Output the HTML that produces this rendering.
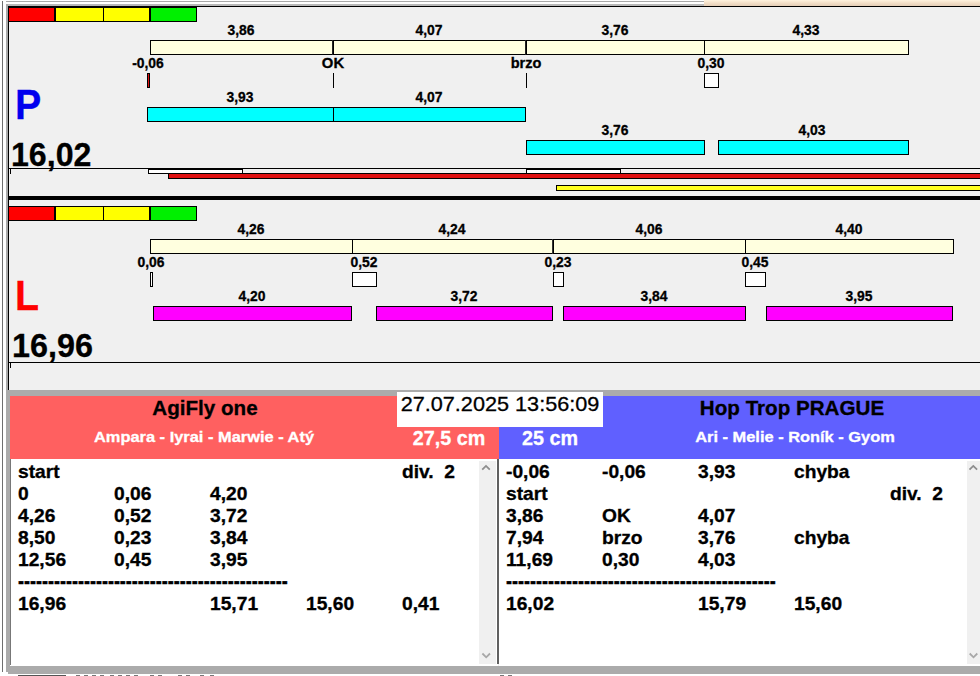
<!DOCTYPE html>
<html><head><meta charset="utf-8"><title>Flyball timing</title>
<style>
html,body{margin:0;padding:0}
body{width:980px;height:676px;position:relative;overflow:hidden;background:#f0f0f0;font-family:"Liberation Sans",sans-serif;font-weight:700}
.a{position:absolute;display:block}
.t{position:absolute;white-space:pre;line-height:1;display:block;-webkit-text-stroke:0.3px currentColor}
</style></head><body>
<div class="a" style="left:0px;top:0px;width:980px;height:6px;background:#ffffff"></div>
<div class="a" style="left:2px;top:1px;width:702px;height:1px;background:#a8a8a8"></div>
<div class="a" style="left:6px;top:4px;width:698px;height:2px;background:#b8b8b8"></div>
<div class="a" style="left:704px;top:0;width:276px;height:6px;background:linear-gradient(#fff3df,#f3dfc8 50%,#e4cdb6)"></div>
<div class="a" style="left:0px;top:0px;width:6px;height:676px;background:#ffffff"></div>
<div class="a" style="left:2px;top:1px;width:1px;height:671px;background:#6e6e6e"></div>
<div class="a" style="left:6px;top:4px;width:2px;height:668px;background:#a9a9a9"></div>
<div class="a" style="left:8px;top:6px;width:972px;height:384px;background:#f0f0f0"></div>
<div class="a" style="left:8px;top:6px;width:972px;height:1px;background:#000"></div>
<div class="a" style="left:8px;top:6px;width:1px;height:384px;background:#000"></div>
<div class="a" style="left:8px;top:7px;width:47px;height:15px;background:#ff0000;border:1px solid #000;box-sizing:border-box;"></div>
<div class="a" style="left:55px;top:7px;width:49px;height:15px;background:#ffff00;border:1px solid #000;box-sizing:border-box;"></div>
<div class="a" style="left:103px;top:7px;width:47px;height:15px;background:#ffff00;border:1px solid #000;box-sizing:border-box;"></div>
<div class="a" style="left:150px;top:7px;width:47px;height:15px;background:#00e800;border:1px solid #000;box-sizing:border-box;"></div>
<div class="a" style="left:150px;top:7px;width:47px;height:15px;background:#00f000;border:1px solid #000;box-sizing:border-box;"></div>
<span class="t " style="top:22.65px;font-size:14px;color:#000;left:241px;transform:translateX(-50%) scaleX(0.99);">3,86</span>
<span class="t " style="top:22.65px;font-size:14px;color:#000;left:429px;transform:translateX(-50%) scaleX(0.99);">4,07</span>
<span class="t " style="top:22.65px;font-size:14px;color:#000;left:615px;transform:translateX(-50%) scaleX(0.99);">3,76</span>
<span class="t " style="top:22.65px;font-size:14px;color:#000;left:806px;transform:translateX(-50%) scaleX(0.99);">4,33</span>
<div class="a" style="left:150px;top:40px;width:759px;height:15px;background:#ffffdf;border:1px solid #000;box-sizing:border-box;"></div>
<div class="a" style="left:333px;top:40px;width:1px;height:15px;background:#000"></div>
<div class="a" style="left:526px;top:40px;width:1px;height:15px;background:#000"></div>
<div class="a" style="left:704px;top:40px;width:1px;height:15px;background:#000"></div>
<div class="a" style="left:332px;top:40px;width:1px;height:15px;background:#222"></div>
<div class="a" style="left:525px;top:40px;width:1px;height:15px;background:#222"></div>
<span class="t " style="top:55.65px;font-size:14px;color:#000;left:147.5px;transform:translateX(-50%) scaleX(0.99);">-0,06</span>
<span class="t " style="top:55.65px;font-size:14px;color:#000;left:332.8px;transform:translateX(-50%) scaleX(1.06);">OK</span>
<span class="t " style="top:55.65px;font-size:14px;color:#000;left:525.9px;transform:translateX(-50%) scaleX(1.04);">brzo</span>
<span class="t " style="top:55.65px;font-size:14px;color:#000;left:711px;transform:translateX(-50%) scaleX(0.99);">0,30</span>
<div class="a" style="left:147px;top:73px;width:3px;height:15px;background:#e01010;border:1px solid #000;box-sizing:border-box;"></div>
<div class="a" style="left:333px;top:73px;width:1px;height:15px;background:#000"></div>
<div class="a" style="left:526px;top:73px;width:1px;height:15px;background:#000"></div>
<div class="a" style="left:704px;top:73px;width:15px;height:15px;background:#fff;border:1px solid #000;box-sizing:border-box;"></div>
<span class="t " style="top:89.65px;font-size:14px;color:#000;left:240px;transform:translateX(-50%) scaleX(0.99);">3,93</span>
<span class="t " style="top:89.65px;font-size:14px;color:#000;left:429px;transform:translateX(-50%) scaleX(0.99);">4,07</span>
<div class="a" style="left:147px;top:107px;width:379px;height:15px;background:#00ffff;border:1px solid #000;box-sizing:border-box;"></div>
<div class="a" style="left:333px;top:107px;width:1px;height:15px;background:#000"></div>
<span class="t " style="top:122.65px;font-size:14px;color:#000;left:615px;transform:translateX(-50%) scaleX(0.99);">3,76</span>
<span class="t " style="top:122.65px;font-size:14px;color:#000;left:812px;transform:translateX(-50%) scaleX(0.99);">4,03</span>
<div class="a" style="left:526px;top:140px;width:179px;height:15px;background:#00ffff;border:1px solid #000;box-sizing:border-box;"></div>
<div class="a" style="left:718px;top:140px;width:191px;height:15px;background:#00ffff;border:1px solid #000;box-sizing:border-box;"></div>
<span class="t " style="top:83.00px;font-size:43px;color:#0000ee;left:14.6px;transform-origin:0 0;transform:scaleX(0.915);">P</span>
<span class="t " style="top:137.90px;font-size:33.2px;color:#000;left:11.4px;transform-origin:0 0;transform:scaleX(0.968);">16,02</span>
<div class="a" style="left:9px;top:168px;width:971px;height:1px;background:#000"></div>
<div class="a" style="left:10px;top:169px;width:1px;height:5px;background:#000"></div>
<div class="a" style="left:148px;top:169px;width:95px;height:5px;background:#fff;border:1px solid #000;box-sizing:border-box;"></div>
<div class="a" style="left:526px;top:169px;width:95px;height:5px;background:#fff;border:1px solid #000;box-sizing:border-box;"></div>
<div class="a" style="left:168px;top:173px;width:820px;height:6px;background:#e01010;border:1px solid #000;box-sizing:border-box;"></div>
<div class="a" style="left:556px;top:185px;width:430px;height:6px;background:#ffff20;border:1px solid #000;box-sizing:border-box;"></div>
<div class="a" style="left:9px;top:196px;width:971px;height:4px;background:#000"></div>
<div class="a" style="left:8px;top:206px;width:47px;height:15px;background:#ff0000;border:1px solid #000;box-sizing:border-box;"></div>
<div class="a" style="left:55px;top:206px;width:49px;height:15px;background:#ffff00;border:1px solid #000;box-sizing:border-box;"></div>
<div class="a" style="left:103px;top:206px;width:47px;height:15px;background:#ffff00;border:1px solid #000;box-sizing:border-box;"></div>
<div class="a" style="left:150px;top:206px;width:47px;height:15px;background:#00e800;border:1px solid #000;box-sizing:border-box;"></div>
<div class="a" style="left:150px;top:206px;width:47px;height:15px;background:#00f000;border:1px solid #000;box-sizing:border-box;"></div>
<span class="t " style="top:221.65px;font-size:14px;color:#000;left:251px;transform:translateX(-50%) scaleX(0.99);">4,26</span>
<span class="t " style="top:221.65px;font-size:14px;color:#000;left:452px;transform:translateX(-50%) scaleX(0.99);">4,24</span>
<span class="t " style="top:221.65px;font-size:14px;color:#000;left:649px;transform:translateX(-50%) scaleX(0.99);">4,06</span>
<span class="t " style="top:221.65px;font-size:14px;color:#000;left:849px;transform:translateX(-50%) scaleX(0.99);">4,40</span>
<div class="a" style="left:150px;top:239px;width:804px;height:15px;background:#ffffdf;border:1px solid #000;box-sizing:border-box;"></div>
<div class="a" style="left:352px;top:239px;width:1px;height:15px;background:#000"></div>
<div class="a" style="left:553px;top:239px;width:1px;height:15px;background:#000"></div>
<div class="a" style="left:745px;top:239px;width:1px;height:15px;background:#000"></div>
<div class="a" style="left:552px;top:239px;width:1px;height:15px;background:#333"></div>
<span class="t " style="top:254.65px;font-size:14px;color:#000;left:151px;transform:translateX(-50%) scaleX(0.99);">0,06</span>
<span class="t " style="top:254.65px;font-size:14px;color:#000;left:364px;transform:translateX(-50%) scaleX(0.99);">0,52</span>
<span class="t " style="top:254.65px;font-size:14px;color:#000;left:558px;transform:translateX(-50%) scaleX(0.99);">0,23</span>
<span class="t " style="top:254.65px;font-size:14px;color:#000;left:755px;transform:translateX(-50%) scaleX(0.99);">0,45</span>
<div class="a" style="left:150px;top:272px;width:3px;height:15px;background:#fff;border:1px solid #000;box-sizing:border-box;"></div>
<div class="a" style="left:352px;top:272px;width:25px;height:15px;background:#fff;border:1px solid #000;box-sizing:border-box;"></div>
<div class="a" style="left:553px;top:272px;width:11px;height:15px;background:#fff;border:1px solid #000;box-sizing:border-box;"></div>
<div class="a" style="left:745px;top:272px;width:21px;height:15px;background:#fff;border:1px solid #000;box-sizing:border-box;"></div>
<span class="t " style="top:288.65px;font-size:14px;color:#000;left:252px;transform:translateX(-50%) scaleX(0.99);">4,20</span>
<span class="t " style="top:288.65px;font-size:14px;color:#000;left:464px;transform:translateX(-50%) scaleX(0.99);">3,72</span>
<span class="t " style="top:288.65px;font-size:14px;color:#000;left:654px;transform:translateX(-50%) scaleX(0.99);">3,84</span>
<span class="t " style="top:288.65px;font-size:14px;color:#000;left:859px;transform:translateX(-50%) scaleX(0.99);">3,95</span>
<div class="a" style="left:153px;top:306px;width:199px;height:15px;background:#ff00ff;border:1px solid #000;box-sizing:border-box;"></div>
<div class="a" style="left:376px;top:306px;width:177px;height:15px;background:#ff00ff;border:1px solid #000;box-sizing:border-box;"></div>
<div class="a" style="left:563px;top:306px;width:183px;height:15px;background:#ff00ff;border:1px solid #000;box-sizing:border-box;"></div>
<div class="a" style="left:766px;top:306px;width:187px;height:15px;background:#ff00ff;border:1px solid #000;box-sizing:border-box;"></div>
<span class="t " style="top:274.10px;font-size:43px;color:#ff0000;left:15.1px;transform-origin:0 0;transform:scaleX(0.915);">L</span>
<span class="t " style="top:328.90px;font-size:33.2px;color:#000;left:11.6px;transform-origin:0 0;transform:scaleX(0.975);">16,96</span>
<div class="a" style="left:9px;top:362px;width:971px;height:1px;background:#000"></div>
<div class="a" style="left:10px;top:363px;width:1px;height:5px;background:#000"></div>
<div class="a" style="left:6px;top:390px;width:974px;height:6px;background:#ababab"></div>
<div class="a" style="left:6px;top:396px;width:4px;height:270px;background:#ababab"></div>
<div class="a" style="left:10px;top:396px;width:489px;height:63px;background:#ff6060"></div>
<div class="a" style="left:499px;top:396px;width:481px;height:63px;background:#6060ff"></div>
<div class="a" style="left:397px;top:392px;width:206px;height:35px;background:#fff"></div>
<span class="t " style="top:393.73px;font-size:20.4px;color:#000;font-weight:400;left:500.2px;transform:translateX(-50%) scaleX(1.062);">27.07.2025 13:56:09</span>
<span class="t " style="top:397.57px;font-size:20px;color:#000;left:204.7px;transform:translateX(-50%) scaleX(1.03);">AgiFly one</span>
<span class="t " style="top:428.85px;font-size:15.3px;color:#fff;left:203.6px;transform:translateX(-50%) scaleX(1.073);">Ampara - Iyrai - Marwie - Atý</span>
<span class="t " style="top:427.78px;font-size:20.7px;color:#fff;left:449.3px;transform:translateX(-50%) scaleX(0.955);">27,5 cm</span>
<span class="t " style="top:427.78px;font-size:20.7px;color:#fff;left:549.7px;transform:translateX(-50%) scaleX(0.955);">25 cm</span>
<span class="t " style="top:397.57px;font-size:20px;color:#000;left:792px;transform:translateX(-50%) scaleX(1.03);">Hop Trop PRAGUE</span>
<span class="t " style="top:428.85px;font-size:15.3px;color:#fff;left:795px;transform:translateX(-50%) scaleX(1.073);">Ari - Melie - Roník - Gyom</span>
<div class="a" style="left:10px;top:459px;width:488px;height:207px;background:#fff"></div>
<div class="a" style="left:10px;top:459px;width:1px;height:206px;background:#777"></div>
<div class="a" style="left:479px;top:461px;width:17px;height:203px;background:#f0f0f0"></div>
<div class="a" style="left:497.4px;top:459px;width:1.6px;height:205px;background:#606060"></div>
<div class="a" style="left:499px;top:459px;width:481px;height:207px;background:#fff"></div>
<div class="a" style="left:967px;top:461px;width:13px;height:203px;background:#f0f0f0"></div>
<svg class="a" style="left:0;top:0" width="980" height="676" viewBox="0 0 980 676" fill="none" stroke-width="1.8"><path d="M482.2 469.7 L486.0 465.9 L489.8 469.7" stroke="#8e8e8e"/><path d="M482.4 653.5 L486.2 657.3 L490.0 653.5" stroke="#a8a8a8"/><path d="M969.5 469.7 L973.3 465.9 L977.1 469.7" stroke="#8e8e8e"/><path d="M969.7 653.5 L973.5 657.3 L977.3 653.5" stroke="#a8a8a8"/></svg>
<span class="t " style="top:464.03px;font-size:17.8px;color:#000;left:18px;transform-origin:0 0;transform:scaleX(1.08);">start</span>
<span class="t " style="top:464.03px;font-size:17.8px;color:#000;left:402px;transform-origin:0 0;transform:scaleX(1.08);">div.&nbsp; 2</span>
<span class="t " style="top:486.03px;font-size:17.8px;color:#000;left:18px;transform-origin:0 0;transform:scaleX(1.08);">0</span>
<span class="t " style="top:486.03px;font-size:17.8px;color:#000;left:114px;transform-origin:0 0;transform:scaleX(1.08);">0,06</span>
<span class="t " style="top:486.03px;font-size:17.8px;color:#000;left:210px;transform-origin:0 0;transform:scaleX(1.08);">4,20</span>
<span class="t " style="top:508.03px;font-size:17.8px;color:#000;left:18px;transform-origin:0 0;transform:scaleX(1.08);">4,26</span>
<span class="t " style="top:508.03px;font-size:17.8px;color:#000;left:114px;transform-origin:0 0;transform:scaleX(1.08);">0,52</span>
<span class="t " style="top:508.03px;font-size:17.8px;color:#000;left:210px;transform-origin:0 0;transform:scaleX(1.08);">3,72</span>
<span class="t " style="top:530.03px;font-size:17.8px;color:#000;left:18px;transform-origin:0 0;transform:scaleX(1.08);">8,50</span>
<span class="t " style="top:530.03px;font-size:17.8px;color:#000;left:114px;transform-origin:0 0;transform:scaleX(1.08);">0,23</span>
<span class="t " style="top:530.03px;font-size:17.8px;color:#000;left:210px;transform-origin:0 0;transform:scaleX(1.08);">3,84</span>
<span class="t " style="top:552.03px;font-size:17.8px;color:#000;left:18px;transform-origin:0 0;transform:scaleX(1.08);">12,56</span>
<span class="t " style="top:552.03px;font-size:17.8px;color:#000;left:114px;transform-origin:0 0;transform:scaleX(1.08);">0,45</span>
<span class="t " style="top:552.03px;font-size:17.8px;color:#000;left:210px;transform-origin:0 0;transform:scaleX(1.08);">3,95</span>
<span class="t " style="top:574.03px;font-size:17.8px;color:#000;left:18px;transform-origin:0 59.6%;transform:scale(1.012,1.35);">---------------------------------------------</span>
<span class="t " style="top:596.03px;font-size:17.8px;color:#000;left:18px;transform-origin:0 0;transform:scaleX(1.08);">16,96</span>
<span class="t " style="top:596.03px;font-size:17.8px;color:#000;left:210px;transform-origin:0 0;transform:scaleX(1.08);">15,71</span>
<span class="t " style="top:596.03px;font-size:17.8px;color:#000;left:306px;transform-origin:0 0;transform:scaleX(1.08);">15,60</span>
<span class="t " style="top:596.03px;font-size:17.8px;color:#000;left:402px;transform-origin:0 0;transform:scaleX(1.08);">0,41</span>
<span class="t " style="top:464.03px;font-size:17.8px;color:#000;left:506px;transform-origin:0 0;transform:scaleX(1.08);">-0,06</span>
<span class="t " style="top:464.03px;font-size:17.8px;color:#000;left:602px;transform-origin:0 0;transform:scaleX(1.08);">-0,06</span>
<span class="t " style="top:464.03px;font-size:17.8px;color:#000;left:698px;transform-origin:0 0;transform:scaleX(1.08);">3,93</span>
<span class="t " style="top:464.03px;font-size:17.8px;color:#000;left:794px;transform-origin:0 0;transform:scaleX(1.08);">chyba</span>
<span class="t " style="top:486.03px;font-size:17.8px;color:#000;left:506px;transform-origin:0 0;transform:scaleX(1.08);">start</span>
<span class="t " style="top:486.03px;font-size:17.8px;color:#000;left:890px;transform-origin:0 0;transform:scaleX(1.08);">div.&nbsp; 2</span>
<span class="t " style="top:508.03px;font-size:17.8px;color:#000;left:506px;transform-origin:0 0;transform:scaleX(1.08);">3,86</span>
<span class="t " style="top:508.03px;font-size:17.8px;color:#000;left:602px;transform-origin:0 0;transform:scaleX(1.08);">OK</span>
<span class="t " style="top:508.03px;font-size:17.8px;color:#000;left:698px;transform-origin:0 0;transform:scaleX(1.08);">4,07</span>
<span class="t " style="top:530.03px;font-size:17.8px;color:#000;left:506px;transform-origin:0 0;transform:scaleX(1.08);">7,94</span>
<span class="t " style="top:530.03px;font-size:17.8px;color:#000;left:602px;transform-origin:0 0;transform:scaleX(1.08);">brzo</span>
<span class="t " style="top:530.03px;font-size:17.8px;color:#000;left:698px;transform-origin:0 0;transform:scaleX(1.08);">3,76</span>
<span class="t " style="top:530.03px;font-size:17.8px;color:#000;left:794px;transform-origin:0 0;transform:scaleX(1.08);">chyba</span>
<span class="t " style="top:552.03px;font-size:17.8px;color:#000;left:506px;transform-origin:0 0;transform:scaleX(1.08);">11,69</span>
<span class="t " style="top:552.03px;font-size:17.8px;color:#000;left:602px;transform-origin:0 0;transform:scaleX(1.08);">0,30</span>
<span class="t " style="top:552.03px;font-size:17.8px;color:#000;left:698px;transform-origin:0 0;transform:scaleX(1.08);">4,03</span>
<span class="t " style="top:574.03px;font-size:17.8px;color:#000;left:506px;transform-origin:0 59.6%;transform:scale(1.012,1.35);">---------------------------------------------</span>
<span class="t " style="top:596.03px;font-size:17.8px;color:#000;left:506px;transform-origin:0 0;transform:scaleX(1.08);">16,02</span>
<span class="t " style="top:596.03px;font-size:17.8px;color:#000;left:698px;transform-origin:0 0;transform:scaleX(1.08);">15,79</span>
<span class="t " style="top:596.03px;font-size:17.8px;color:#000;left:794px;transform-origin:0 0;transform:scaleX(1.08);">15,60</span>
<div class="a" style="left:6px;top:666px;width:974px;height:8px;background:#ababab"></div>
<div class="a" style="left:0px;top:672px;width:8px;height:4px;background:#fff"></div>
<div class="a" style="left:8px;top:674px;width:972px;height:2px;background:#fff"></div>
<div class="a" style="left:18px;top:675px;width:48px;height:1px;background:#555"></div>
<div class="a" style="left:76px;top:675px;width:4px;height:1px;background:#777"></div>
<div class="a" style="left:84px;top:675px;width:4px;height:1px;background:#777"></div>
<div class="a" style="left:92px;top:675px;width:4px;height:1px;background:#777"></div>
<div class="a" style="left:100px;top:675px;width:4px;height:1px;background:#777"></div>
<div class="a" style="left:110px;top:675px;width:4px;height:1px;background:#777"></div>
<div class="a" style="left:118px;top:675px;width:4px;height:1px;background:#777"></div>
<div class="a" style="left:126px;top:675px;width:4px;height:1px;background:#777"></div>
<div class="a" style="left:134px;top:675px;width:4px;height:1px;background:#777"></div>
<div class="a" style="left:150px;top:675px;width:4px;height:1px;background:#777"></div>
<div class="a" style="left:158px;top:675px;width:4px;height:1px;background:#777"></div>
<div class="a" style="left:178px;top:675px;width:4px;height:1px;background:#777"></div>
<div class="a" style="left:186px;top:675px;width:4px;height:1px;background:#777"></div>
<div class="a" style="left:200px;top:675px;width:4px;height:1px;background:#777"></div>
<div class="a" style="left:210px;top:675px;width:4px;height:1px;background:#777"></div>
<div class="a" style="left:500px;top:675px;width:4px;height:1px;background:#777"></div>
<div class="a" style="left:508px;top:675px;width:4px;height:1px;background:#777"></div>
</body></html>
